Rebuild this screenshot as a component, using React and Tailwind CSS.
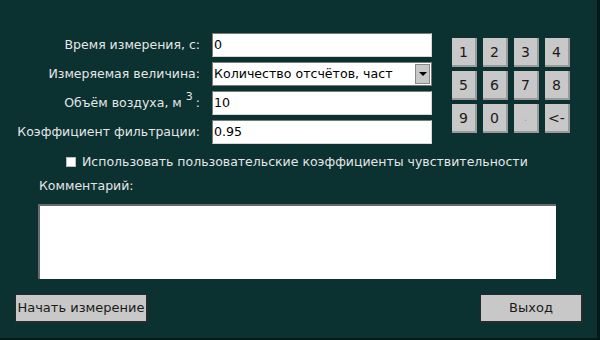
import React from "react";

const font = { fontFamily: '"DejaVu Sans", Verdana, sans-serif' };

const Key = ({ label }) => (
  <button className="w-[25px] h-[29px] bg-[#c8c8c8] border-r-2 border-b-2 border-[#9a9a9a] text-[14px] text-[#1a1a1a] flex items-center justify-center leading-none">
    {label}
  </button>
);

const Field = ({ value }) => (
  <div className="h-6 bg-white border border-[#7a7a7a] border-r-[#d8d8d8] border-b-[#d8d8d8] flex items-center px-[1px] text-[12.6px] text-black">
    {value}
  </div>
);

const App = () => {
  const keys = ["1", "2", "3", "4", "5", "6", "7", "8", "9", "0", ".", "<-"];
  return (
    <div
      className="w-[600px] h-[340px] bg-[#0b3131] border-r-[3px] border-b-[2px] border-[#041a1a] flex flex-col text-[#e6e6e6] overflow-hidden text-[12.5px] leading-4"
      style={font}
    >
      <div className="flex pt-[33px]">
        <div className="grid grid-cols-[200px_220px] gap-x-3 gap-y-[5px]">
          <div className="flex items-center justify-end">Время измерения, с:</div>
          <Field value="0" />
          <div className="flex items-center justify-end">Измеряемая величина:</div>
          <div className="h-6 bg-white border border-[#7a7a7a] flex items-center text-[12.6px] text-black">
            <div className="flex-1 px-[1px] overflow-hidden whitespace-nowrap">Количество отсчётов, част</div>
            <div className="w-[15px] h-[20px] mr-[1px] bg-[#c8c8c8] border border-[#8a8a8a] flex items-center justify-center">
              <div className="w-0 h-0 border-l-[4px] border-r-[4px] border-t-[4px] border-l-transparent border-r-transparent border-t-black" />
            </div>
          </div>
          <div className="flex items-center justify-end">
            Объём воздуха, м <span className="text-[11px] relative -top-[6px] ml-[4px]">3</span>
            <span className="ml-[3px]">:</span>
          </div>
          <Field value="10" />
          <div className="flex items-center justify-end">Коэффициент фильтрации:</div>
          <Field value="0.95" />
        </div>
        <div className="ml-5 mt-[5px] grid grid-cols-4 gap-x-[6px] gap-y-1 h-fit">
          {keys.map((k) => (
            <Key key={k} label={k === "." ? <span className="text-[#9a9a9a] text-[10px]">.</span> : k} />
          ))}
        </div>
      </div>
      <div className="flex items-center h-4 mt-[10px] ml-[66px]">
        <div className="w-[10px] h-[10px] bg-white border border-[#bdbdbd]" />
        <span className="ml-[6px]">Использовать пользовательские коэффициенты чувствительности</span>
      </div>
      <div className="ml-[39px] mt-[8px]">Комментарий:</div>
      <div className="ml-[38px] mt-[10px] w-[518px] h-[75px] bg-white border-t-2 border-l-2 border-[#6a6a6a]" />
      <div className="flex justify-between items-center mt-[15px] ml-[15px] mr-[14px]">
        <button className="w-[133px] h-[29px] bg-[#c8c8c8] border border-[#2a2a2a] border-r-2 border-b-2 text-[13px] text-[#1a1a1a] whitespace-nowrap">
          Начать измерение
        </button>
        <button className="w-[103px] h-[29px] bg-[#c8c8c8] border border-[#2a2a2a] border-r-2 border-b-2 text-[13px] text-[#1a1a1a]">
          Выход
        </button>
      </div>
    </div>
  );
};

export default App;
